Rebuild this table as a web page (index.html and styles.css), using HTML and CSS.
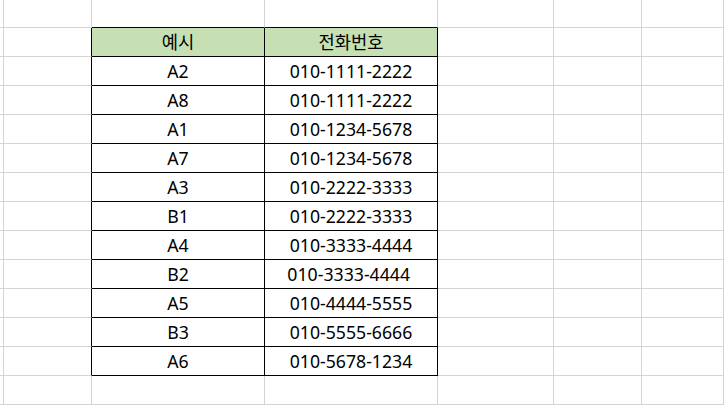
FILE: index.html
```html
<!DOCTYPE html>
<html lang="ko">
<head>
<meta charset="utf-8">
<title>Sheet</title>
<link rel="stylesheet" href="styles.css">
</head>
<body>
<div class="sheet">
  <div class="c"></div><div class="c"></div><div class="c top"></div><div class="c top"></div><div class="c"></div><div class="c"></div><div class="c"></div>

  <div class="c"></div><div class="c edge"></div><div class="c t h">예시</div><div class="c t h">전화번호</div><div class="c"></div><div class="c"></div><div class="c"></div>
  <div class="c"></div><div class="c edge"></div><div class="c t">A2</div><div class="c t">010-1111-2222</div><div class="c"></div><div class="c"></div><div class="c"></div>
  <div class="c"></div><div class="c edge"></div><div class="c t">A8</div><div class="c t">010-1111-2222</div><div class="c"></div><div class="c"></div><div class="c"></div>
  <div class="c"></div><div class="c edge"></div><div class="c t">A1</div><div class="c t">010-1234-5678</div><div class="c"></div><div class="c"></div><div class="c"></div>
  <div class="c"></div><div class="c edge"></div><div class="c t">A7</div><div class="c t">010-1234-5678</div><div class="c"></div><div class="c"></div><div class="c"></div>
  <div class="c"></div><div class="c edge"></div><div class="c t">A3</div><div class="c t">010-2222-3333</div><div class="c"></div><div class="c"></div><div class="c"></div>
  <div class="c"></div><div class="c edge"></div><div class="c t">B1</div><div class="c t">010-2222-3333</div><div class="c"></div><div class="c"></div><div class="c"></div>
  <div class="c"></div><div class="c edge"></div><div class="c t">A4</div><div class="c t">010-3333-4444</div><div class="c"></div><div class="c"></div><div class="c"></div>
  <div class="c"></div><div class="c edge"></div><div class="c t">B2</div><div class="c t">010-3333-4444&nbsp;</div><div class="c"></div><div class="c"></div><div class="c"></div>
  <div class="c"></div><div class="c edge"></div><div class="c t">A5</div><div class="c t">010-4444-5555</div><div class="c"></div><div class="c"></div><div class="c"></div>
  <div class="c"></div><div class="c edge"></div><div class="c t">B3</div><div class="c t">010-5555-6666</div><div class="c"></div><div class="c"></div><div class="c"></div>
  <div class="c"></div><div class="c edge"></div><div class="c t">A6</div><div class="c t">010-5678-1234</div><div class="c"></div><div class="c"></div><div class="c"></div>

  <div class="c"></div><div class="c"></div><div class="c"></div><div class="c"></div><div class="c"></div><div class="c"></div><div class="c"></div>
</div>
</body>
</html>
```

FILE: styles.css
```css
html, body {
  margin: 0;
  padding: 0;
  background: #ffffff;
  overflow: hidden;
}

.sheet {
  display: grid;
  grid-template-columns: 4px 88px 173px 173px 116px 88px 1fr;
  grid-template-rows: 28px repeat(13, 29px);
  width: 724px;
  font-family: "Noto Sans", "Noto Sans CJK KR", sans-serif;
  font-size: 17.7px;
  color: #000000;
}

.c {
  box-sizing: border-box;
  border-right: 1px solid #d4d4d4;
  border-bottom: 1px solid #d4d4d4;
  display: flex;
  align-items: center;
  justify-content: center;
  white-space: pre;
  line-height: 1;
  padding-top: 2px;
}

.top {
  border-bottom-color: #000000;
}

.edge {
  border-right-color: #000000;
}

.t {
  border-right-color: #000000;
  border-bottom-color: #000000;
}

.h {
  background: #c6e0b4;
}
```
